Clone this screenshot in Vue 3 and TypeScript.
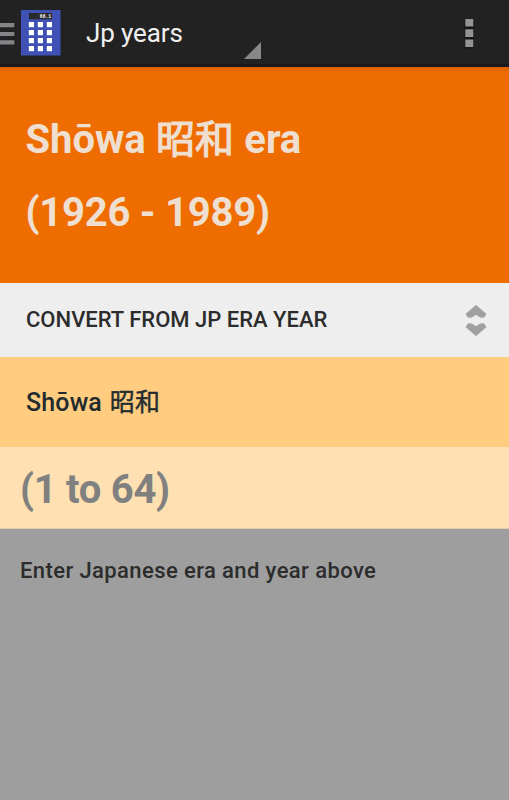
<script setup lang="ts">
interface Era {
  name: string
  kanji: string
  start: number
  end: number
}

const era: Era = { name: 'Shōwa', kanji: '昭和', start: 1926, end: 1989 }
const lastYear = era.end - era.start + 1
const keyColumns = [28.8, 37.8, 46.8]
const keyRows = [22, 30, 38, 46]
</script>

<template>
  <div class="screen">
    <header class="bar">
      <svg class="launcher" width="62" height="64" viewBox="0 0 62 64" aria-hidden="true">
        <path d="M0 23h14.3v4.3H0zM0 32h14.3v4H0zM0 40.2h14.3v4.3H0z" fill="#858589" />
        <rect x="21" y="10" width="39.5" height="45.5" fill="#3f51b5" />
        <rect x="29" y="13" width="23" height="6.3" fill="#2b2b2e" />
        <text class="digits" x="39.8" y="17.8" textLength="11.4" lengthAdjust="spacingAndGlyphs">66.1</text>
        <template v-for="y in keyRows" :key="y">
          <rect v-for="x in keyColumns" :key="x" :x="x" :y="y" width="5.2" height="5.2" fill="#fff" />
        </template>
      </svg>
      <div class="spinner">
        <span class="title">Jp years</span>
        <svg class="corner" width="17" height="17" viewBox="0 0 17 17"><path d="M17 0v17H0z" fill="#88888a" /></svg>
      </div>
      <svg class="overflow" width="12" height="33" viewBox="0 0 12 33">
        <path d="M1.5 1.5h9.5v30H1.5z" fill="#161617" />
        <path d="M2.3 1.9h8v7.7h-8zM2.3 12.2h8v7.7h-8zM2.3 22.4h8v7.7h-8z" fill="#949494" />
      </svg>
    </header>

    <section class="result">
      <p class="name">{{ era.name }} <span class="kanji">{{ era.kanji }}</span> era</p>
      <p>({{ era.start }} - {{ era.end }})</p>
    </section>

    <section class="mode">
      <span class="mode-label">CONVERT FROM JP ERA YEAR</span>
      <svg class="sorter" width="22" height="33" viewBox="0 0 22 33">
        <path d="M11 1.8 L20.5 10 L18.8 13 L15.5 12.8 L11 10 L6.5 12.8 L3.2 13 L1.5 10 Z M11 31.2 L20.5 23 L18.8 20 L15.5 20.2 L11 23 L6.5 20.2 L3.2 20 L1.5 23 Z" fill="#a0a0a0" stroke="#a0a0a0" stroke-width="1.4" stroke-linejoin="round" />
      </svg>
    </section>

    <section class="era">{{ era.name }} <span class="era-kanji">{{ era.kanji }}</span></section>
    <section class="year">(1 to {{ lastYear }})</section>
    <p class="hint">Enter Japanese era and year above</p>
  </div>
</template>

<style>
body {
  background: #9e9e9e;
}
</style>

<style scoped>
.screen {
  height: 800px;
  overflow: hidden;
  display: flex;
  flex-direction: column;
  background: #9e9e9e;
  color: #2c2c2c;
  font-family: Roboto, "Noto Sans CJK JP", sans-serif;
}

.bar {
  box-sizing: border-box;
  height: 67px;
  flex: none;
  display: flex;
  background: #222;
  border-bottom: 3px solid #1b1a1c;
}

.launcher {
  flex: none;
}

.digits {
  font: bold 5px "Liberation Mono", monospace;
  fill: #fff;
}

.spinner {
  width: 175px;
  margin-left: 24px;
  display: flex;
  justify-content: space-between;
}

.title {
  color: #f0f0f0;
  font-size: 26px;
  letter-spacing: -0.12px;
  line-height: 67px;
  white-space: nowrap;
}

.corner {
  margin-top: 42px;
}

.overflow {
  margin: 17px 34px 0 auto;
}

.result {
  box-sizing: border-box;
  height: 216px;
  flex: none;
  padding: 36px 26px 0 25.5px;
  background: linear-gradient(#dc6200, #ef6c00 6px);
  color: #efdfd0;
  font-size: 40px;
  font-weight: 700;
  letter-spacing: -0.23px;
  line-height: 73px;
}

.result p {
  height: 73px;
  margin: 0;
  white-space: nowrap;
}

.result .name {
  letter-spacing: -0.05px;
  word-spacing: 0.5px;
}

.kanji {
  font-size: 39px;
  font-weight: 400;
  line-height: 1;
  -webkit-text-stroke: 1.2px currentColor;
}

.mode {
  box-sizing: border-box;
  height: 74px;
  flex: none;
  display: flex;
  align-items: center;
  justify-content: space-between;
  padding: 0 22px 0 26px;
  background: #eee;
  font-size: 22px;
  font-weight: 500;
}

.mode-label {
  padding-bottom: 2px;
}

.era {
  height: 90px;
  flex: none;
  padding-left: 26px;
  background: #ffcc80;
  color: #222b2e;
  font-size: 25px;
  font-weight: 500;
  letter-spacing: 0.15px;
  word-spacing: 1.5px;
  line-height: 91px;
}

.era-kanji {
  font-weight: 400;
  line-height: 1;
  -webkit-text-stroke: 0.4px currentColor;
}

.year {
  box-sizing: border-box;
  height: 82px;
  flex: none;
  padding-left: 20px;
  background: #ffe0b2;
  border-bottom: 1px solid #e2cbaa;
  color: #808080;
  font-size: 40px;
  font-weight: 700;
  letter-spacing: -0.28px;
  line-height: 86px;
}

.hint {
  margin: 0;
  padding-left: 20px;
  font-size: 22px;
  font-weight: 500;
  letter-spacing: 0.4px;
  line-height: 84px;
}
</style>
